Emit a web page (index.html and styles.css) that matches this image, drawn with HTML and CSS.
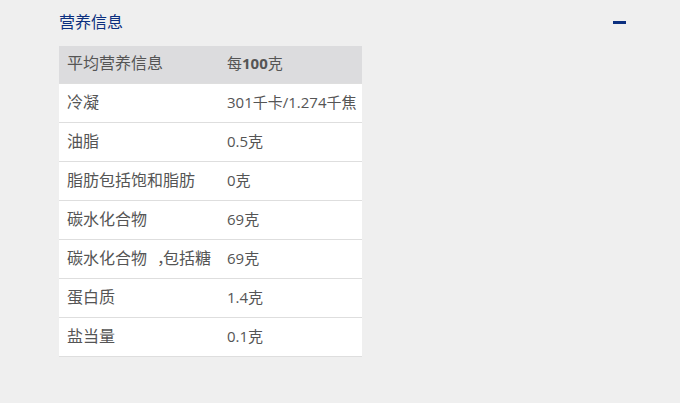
FILE: index.html
```html
<!DOCTYPE html>
<html lang="zh">
<head>
<meta charset="utf-8">
<link rel="stylesheet" href="styles.css">
</head>
<body>
<section class="panel">
  <div class="head">
    <h2 class="title">营养信息</h2>
    <span class="toggle" aria-label="收起"></span>
  </div>
  <table class="nutri">
    <thead>
      <tr><th>平均营养信息</th><th class="v">每<b>100</b>克</th></tr>
    </thead>
    <tbody>
      <tr><td>冷凝</td><td>301千卡/1.274千焦</td></tr>
      <tr><td>油脂</td><td>0.5克</td></tr>
      <tr><td>脂肪包括饱和脂肪</td><td>0克</td></tr>
      <tr><td>碳水化合物</td><td>69克</td></tr>
      <tr><td>碳水化合物<span class="punct">，</span>包括糖</td><td>69克</td></tr>
      <tr><td>蛋白质</td><td>1.4克</td></tr>
      <tr><td>盐当量</td><td>0.1克</td></tr>
    </tbody>
  </table>
</section>
</body>
</html>
```
FILE: styles.css
```css
html, body {
  margin: 0;
  padding: 0;
  background: #efefef;
}
body {
  font-family: "Open Sans", "Noto Sans CJK SC", sans-serif;
  color: #555;
}
.panel {
  padding: 10px 54px 0 59px;
}
.head {
  display: flex;
  justify-content: space-between;
  align-items: center;
  height: 24px;
}
.title {
  margin: 0;
  font-size: 16px;
  font-weight: normal;
  color: #0b2f7f;
  line-height: 24px;
}
.toggle {
  display: block;
  width: 13px;
  height: 3px;
  background: #0b2f7f;
}
.nutri {
  margin-top: 12px;
  width: 303px;
  border-collapse: collapse;
  font-size: 15px;
}
.nutri th, .nutri td {
  text-align: left;
  padding: 0 0 3px 8px;
  height: 35px;
  line-height: 20px;
  font-weight: normal;
  white-space: nowrap;
}
.nutri th {
  height: 34px;
}
.nutri th:first-child, .nutri td:first-child {
  width: 152px;
  font-size: 16px;
}
.punct {
  display: inline-block;
  width: 16px;
  text-align: right;
  letter-spacing: -10px;
}
.nutri thead tr {
  background: #dcdcde;
}
.nutri th b {
  font-weight: 700;
}
.nutri tbody tr {
  background: #fff;
  border-top: 1px solid #dedede;
}
.nutri tbody tr:last-child {
  border-bottom: 1px solid #dedede;
}
```
